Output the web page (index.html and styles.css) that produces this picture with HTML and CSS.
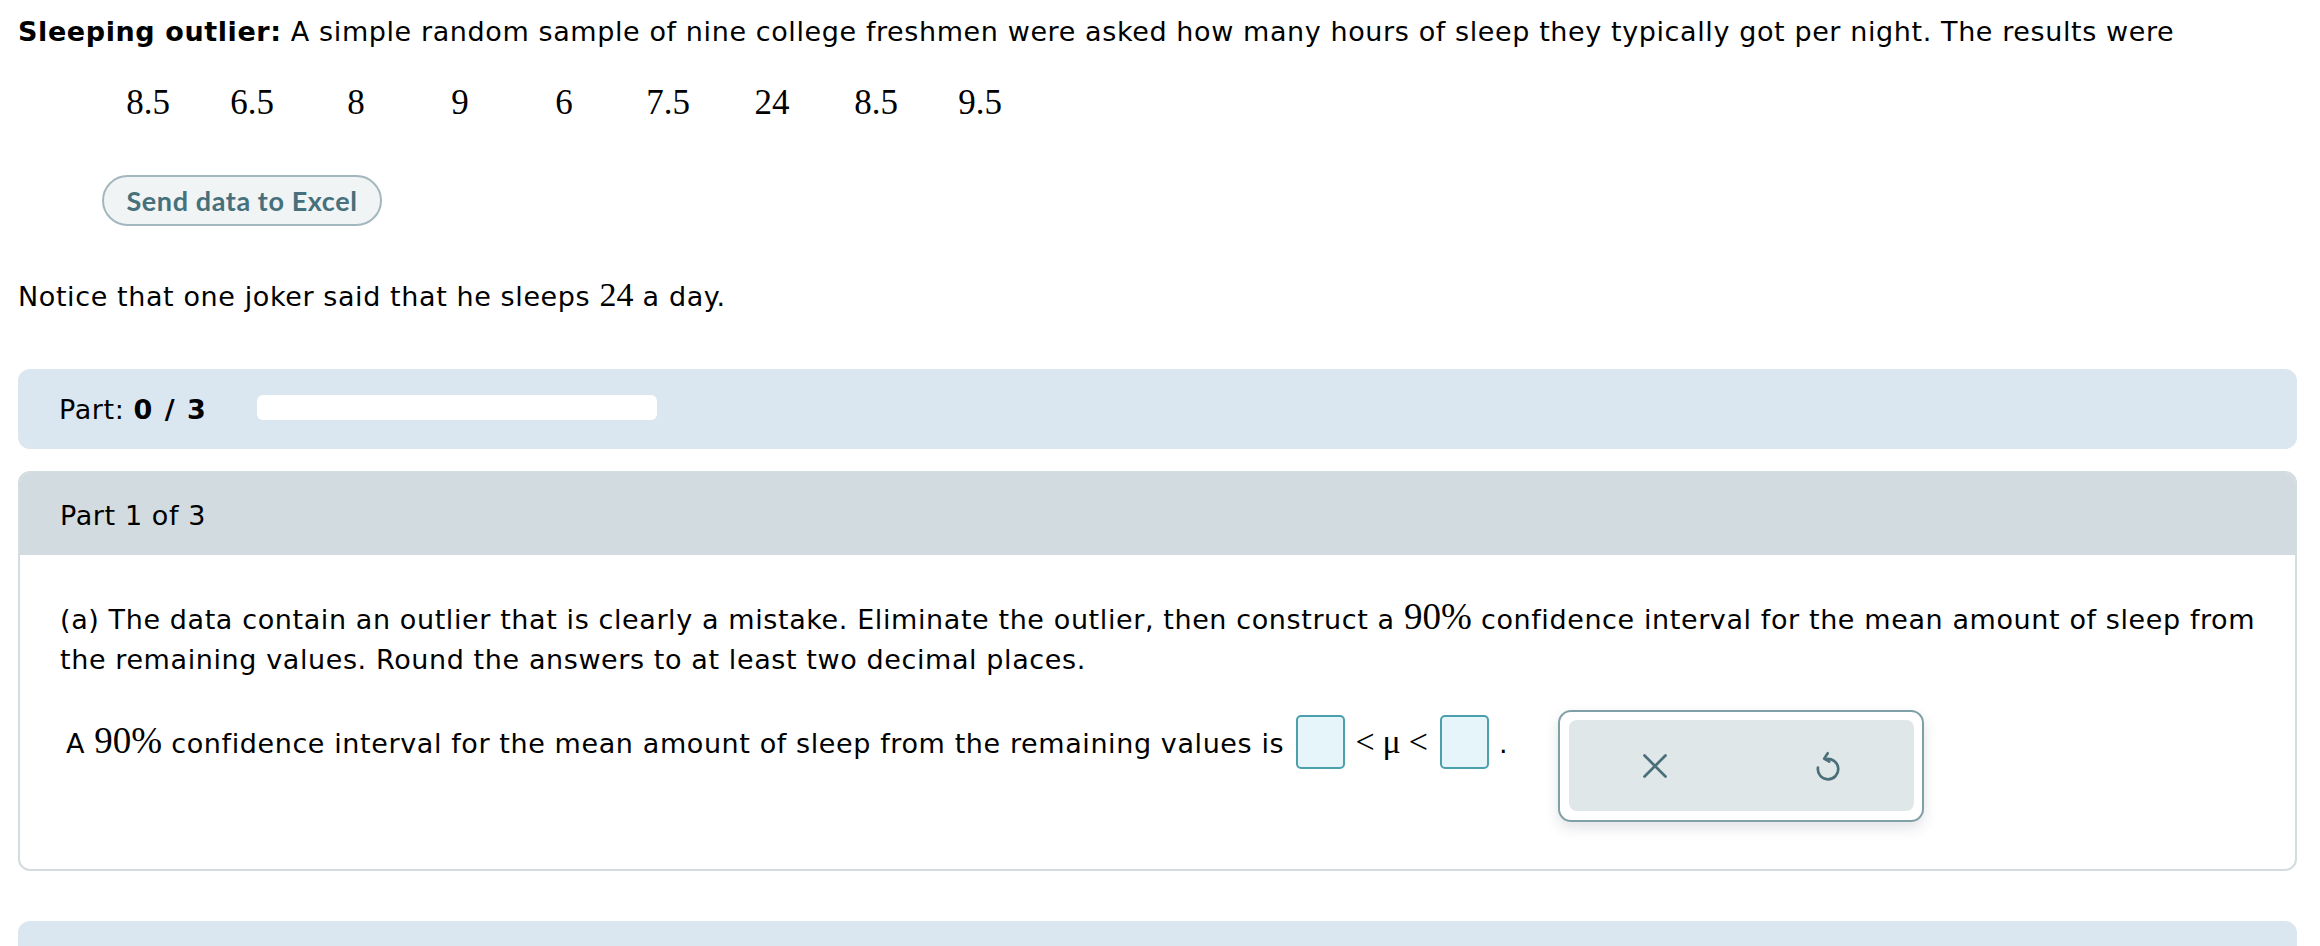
FILE: index.html
```html
<!DOCTYPE html>
<html>
<head>
<meta charset="utf-8">
<link rel="stylesheet" href="styles.css">
</head>
<body>
<div class="page">
  <p class="title"><b>Sleeping outlier:</b> A simple random sample of nine college freshmen were asked how many hours of sleep they typically got per night. The results were</p>
  <div class="data">
    <span class="cell">8.5</span><span class="cell">6.5</span><span class="cell">8</span><span class="cell">9</span><span class="cell">6</span><span class="cell">7.5</span><span class="cell">24</span><span class="cell">8.5</span><span class="cell">9.5</span>
  </div>
  <div class="btnrow"><button class="excel">Send data to Excel</button></div>
  <p class="notice">Notice that one joker said that he sleeps <span class="num">24</span> a day.</p>

  <div class="progress">
    <span class="plabel">Part: <b>0 / 3</b></span>
    <span class="bar"></span>
  </div>

  <div class="card">
    <div class="card-head">Part 1 of 3</div>
    <div class="card-body">
      <p class="question">(a) The data contain an outlier that is clearly a mistake. Eliminate the outlier, then construct a <span class="pct">90%</span> confidence interval for the mean amount of sleep from the remaining values. Round the answers to at least two decimal places.</p>
      <div class="answer">
        <p class="sentence">A <span class="pct">90%</span> confidence interval for the mean amount of sleep from the remaining values is <span class="box first"></span><span class="math"><span>&lt;</span><span>μ</span><span>&lt;</span></span><span class="box second"></span>.</p>
        <div class="panel">
          <div class="panel-inner">
            <button class="icon" aria-label="clear">
              <svg width="30" height="30" viewBox="0 0 24 24"><path d="M3.6 3.6 L20.4 20.4 M20.4 3.6 L3.6 20.4" fill="none" stroke="#4b6f79" stroke-width="2.2" stroke-linecap="round"/></svg>
            </button>
            <button class="icon" aria-label="undo">
              <svg width="34" height="34" viewBox="0 0 24 24"><path d="M10.4 7.2 A7.2 7.2 0 1 1 4.9 13.2" fill="none" stroke="#4b6f79" stroke-width="1.9" stroke-linecap="round"/><path d="M11.8 3 L9.3 6.8 L12.9 8.9" fill="none" stroke="#4b6f79" stroke-width="1.9" stroke-linecap="round" stroke-linejoin="round"/></svg>
            </button>
          </div>
        </div>
      </div>
    </div>
  </div>

  <div class="next"></div>
</div>
</body>
</html>
```
FILE: styles.css
```css
html, body {
  margin: 0;
  padding: 0;
  background: #ffffff;
}
body {
  font-family: "DejaVu Sans", Verdana, sans-serif;
  font-size: 27px;
  letter-spacing: 0.6px;
  color: #000;
}
.page {
  padding: 0 23px 0 18px;
}
p { margin: 0; }
.title {
  padding-top: 14px;
  line-height: 36px;
}
.num, .pct, .math {
  font-family: "Liberation Serif", "Times New Roman", serif;
  letter-spacing: 0;
  line-height: 1;
}
.num { font-size: 34px; }
.pct { font-size: 37px; }
.math { font-size: 34px; }
.math span { margin: 0 4px; }
.data {
  display: flex;
  margin-top: 33px;
  margin-left: 78px;
  font-family: "Liberation Serif", "Times New Roman", serif;
  font-size: 35px;
  line-height: 40px;
  letter-spacing: 0;
}
.cell {
  width: 104px;
  text-align: center;
}
.btnrow {
  margin-top: 52px;
  padding-left: 84px;
}
.excel {
  height: 51px;
  width: 280px;
  border-radius: 26px;
  border: 2px solid #a3b7be;
  background: #f0f4f5;
  color: #46707b;
  font-family: Lato, "Open Sans", sans-serif;
  font-weight: 700;
  font-size: 27px;
  letter-spacing: 0.6px;
  padding: 0;
}
.notice {
  margin-top: 52px;
  line-height: 36px;
}
.progress {
  margin-top: 54px;
  height: 80px;
  background: #dbe7f0;
  border-radius: 12px;
  display: flex;
  align-items: center;
  padding-left: 41px;
}
.plabel b { font-weight: 700; letter-spacing: 1.5px; }
.bar {
  margin-left: 50px;
  width: 400px;
  height: 25px;
  margin-top: -3px;
  background: #fff;
  border-radius: 6px;
}
.card {
  margin-top: 22px;
  border: 2px solid #d3dcdf;
  border-radius: 12px;
  overflow: hidden;
}
.card-head {
  height: 82px;
  background: #d2dbdf;
  display: flex;
  align-items: center;
  padding-left: 40px;
  padding-top: 3px;
  box-sizing: border-box;
}
.card-body {
  padding: 43px 28px 47px 40px;
}
.question {
  line-height: 40px;
}
.answer {
  display: flex;
  align-items: flex-start;
  margin-top: 30px;
}
.sentence {
  margin-top: 5px;
  line-height: 40px;
  padding-left: 6px;
}
.box {
  display: inline-block;
  width: 49px;
  height: 54px;
  box-sizing: border-box;
  border: 2px solid #4aa0ad;
  background: #e6f5f9;
  border-radius: 5px;
  vertical-align: -16px;
}
.box.first { margin: 0 6px 0 3px; }
.box.second { margin: 0 10px 0 8px; }
.panel {
  margin-left: 50px;
  width: 366px;
  height: 112px;
  box-sizing: border-box;
  border: 2px solid #80a0a8;
  border-radius: 13px;
  background: #fff;
  padding: 8px 8px 9px 9px;
  box-shadow: 0 6px 14px rgba(40, 60, 70, 0.14);
}
.panel-inner {
  height: 100%;
  background: #e0e7e9;
  border-radius: 8px;
  display: flex;
}
.icon {
  flex: 1;
  border: 0;
  background: transparent;
  display: flex;
  align-items: center;
  justify-content: center;
  padding: 0;
}
.next {
  margin-top: 50px;
  height: 80px;
  background: #dbe7f0;
  border-radius: 12px;
}
```
